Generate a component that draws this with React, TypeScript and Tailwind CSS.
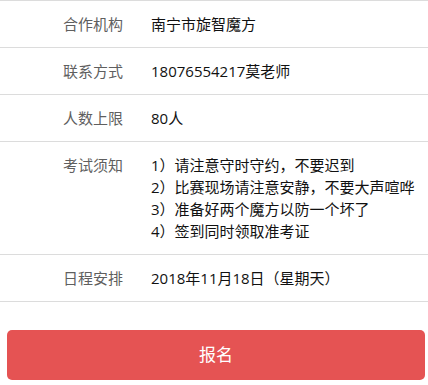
const rows: { label: string; value: string[] }[] = [
  { label: '合作机构', value: ['南宁市旋智魔方'] },
  { label: '联系方式', value: ['18076554217莫老师'] },
  { label: '人数上限', value: ['80人'] },
  {
    label: '考试须知',
    value: [
      '1）请注意守时守约，不要迟到',
      '2）比赛现场请注意安静，不要大声喧哗',
      '3）准备好两个魔方以防一个坏了',
      '4）签到同时领取准考证',
    ],
  },
  { label: '日程安排', value: ['2018年11月18日（星期天）'] },
];

export default function App() {
  return (
    <div
      className="w-[428px] h-[385px] bg-white overflow-hidden"
      style={{ fontFamily: '"Open Sans", "Noto Sans CJK SC", sans-serif' }}
    >
      <div className="border-t border-[#dcdcdc]">
        {rows.map((row) => (
          <div key={row.label} className="flex border-b border-[#dcdcdc] py-3 text-[15px] leading-[22px]">
            <div className="w-[151px] shrink-0 pl-[63px] text-[#5f5f5f]">{row.label}</div>
            <div className="text-[#111]">
              {row.value.map((line) => (
                <div key={line}>{line}</div>
              ))}
            </div>
          </div>
        ))}
      </div>
      <button
        type="button"
        className="mt-[28px] ml-[7px] flex h-[50px] w-[418px] items-center justify-center rounded-[5px] bg-[#e55353] text-[17px] text-white"
      >
        报名
      </button>
    </div>
  );
}
